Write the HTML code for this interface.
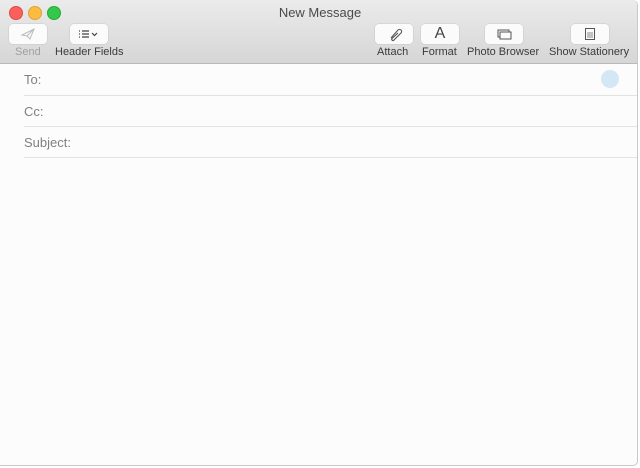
<html><head><style>
body{margin:0;width:640px;height:468px;overflow:hidden;background:#fff;font-family:"Liberation Sans",sans-serif;}
.win{position:absolute;left:0;top:0;width:637px;height:465px;background:#fcfcfc;border-right:1px solid #c8c8c8;border-bottom:1px solid #c8c8c8;border-radius:0 5px 5px 0;overflow:hidden;}
.tb{position:absolute;left:0;top:0;width:640px;height:63px;background:linear-gradient(#ebebeb,#d6d6d6);border-bottom:1px solid #b9b9b9;}
.dot{position:absolute;top:6px;width:12px;height:12px;border-radius:50%;}
.title{position:absolute;top:5px;left:0;width:640px;text-align:center;font-size:13px;color:#4a4a4a;}
.btn{position:absolute;top:24px;width:38px;height:20px;background:#fbfbfb;border-radius:4px;box-shadow:0 0 0 .5px #c8c8c8;}
.lbl{position:absolute;top:46px;font-size:11px;color:#3a3a3a;white-space:nowrap;}
.f{position:absolute;left:24px;font-size:13px;color:#808080;}
.ln{position:absolute;left:24px;right:0;height:1px;background:#e3e3e3;}
</style></head><body>
<div class="win">
<div class="tb">
<div class="dot" style="left:9px;background:#fc605c;border:.5px solid #de4a46"></div>
<div class="dot" style="left:28px;background:#fdbc40;border:.5px solid #dea236"></div>
<div class="dot" style="left:47px;background:#34c84a;border:.5px solid #27aa35"></div>
<div class="title">New Message</div>
<div class="btn" style="left:9px"><svg width="38" height="20"><path d="M13 11 L25 5 L21 15 L18 12 Z M18 12 L25 5" fill="none" stroke="#bbb" stroke-width="1"/></svg></div>
<div class="lbl" style="left:15px;color:#a0a0a0">Send</div>
<div class="btn" style="left:70px"><svg width="38" height="20"><g stroke="#444" stroke-width="1.2"><path d="M9 7h1M9 10h1M9 13h1M12 7h7M12 10h7M12 13h7"/><path d="M22 9l2.5 2.5L27 9" fill="none"/></g></svg></div>
<div class="lbl" style="left:55px">Header Fields</div>
<div class="btn" style="left:375px"><svg width="38" height="20"><path d="M16 14 L23 6 a2 2 0 0 1 3 3 L19 16 a1 1 0 0 1 -2 -1.5 L23 9" fill="none" stroke="#555" stroke-width="1.1"/></svg></div>
<div class="lbl" style="left:377px">Attach</div>
<div class="btn" style="left:421px;font-size:16px;text-align:center;line-height:20px;color:#444">A</div>
<div class="lbl" style="left:422px">Format</div>
<div class="btn" style="left:485px"><svg width="38" height="20"><rect x="13" y="6" width="11" height="7" fill="none" stroke="#555"/><rect x="15" y="8" width="11" height="7" fill="#fbfbfb" stroke="#555"/></svg></div>
<div class="lbl" style="left:467px">Photo Browser</div>
<div class="btn" style="left:571px"><svg width="38" height="20"><rect x="14.5" y="4.5" width="9" height="11" fill="none" stroke="#555"/><path d="M16 9h6M16 11h6M16 13h6" stroke="#888"/></svg></div>
<div class="lbl" style="left:549px">Show Stationery</div>
</div>
<div class="f" style="top:72px">To:</div>
<div style="position:absolute;left:601px;top:70px;width:18px;height:18px;border-radius:50%;background:#d3e7f5"></div>
<div class="ln" style="top:95px"></div>
<div class="f" style="top:104px">Cc:</div>
<div class="ln" style="top:126px"></div>
<div class="f" style="top:135px">Subject:</div>
<div class="ln" style="top:157px"></div>
</div>
</body></html>
